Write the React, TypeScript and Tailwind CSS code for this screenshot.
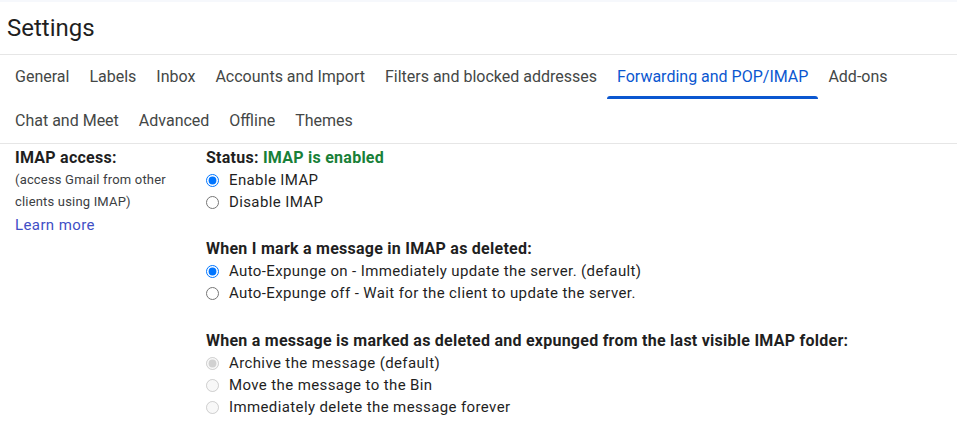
const tabsRow1 = [
  'General',
  'Labels',
  'Inbox',
  'Accounts and Import',
  'Filters and blocked addresses',
  'Forwarding and POP/IMAP',
  'Add-ons',
];
const tabsRow2 = ['Chat and Meet', 'Advanced', 'Offline', 'Themes'];

function Tab({ label, active }: { label: string; active?: boolean }) {
  return (
    <div
      className={
        'relative flex h-[44px] items-center px-[10px] text-[16px] ' +
        (active ? 'text-[#0b57d0]' : 'text-[#444746]')
      }
    >
      {label}
      {active && (
        <span className="absolute bottom-0 left-0 right-0 h-[3px] rounded-t-[3px] bg-[#0b57d0]" />
      )}
    </div>
  );
}

function Radio({
  name,
  label,
  checked,
  disabled,
}: {
  name: string;
  label: string;
  checked?: boolean;
  disabled?: boolean;
}) {
  return (
    <label className="flex h-[22px] items-center">
      <input
        type="radio"
        name={name}
        defaultChecked={checked}
        disabled={disabled}
        className="h-[13px] w-[13px]"
      />
      <span className="ml-[10px] tracking-[0.38px]">{label}</span>
    </label>
  );
}

export default function App() {
  return (
    <div
      className="h-[421px] w-[957px] overflow-hidden bg-white text-[#1f1f1f]"
      style={{ fontFamily: 'Roboto, "Liberation Sans", sans-serif' }}
    >
      <div className="h-[2px] bg-[#f6f8fc]" />
      <div className="flex h-[53px] items-center border-b border-[#e6e6e6] pl-[7px] text-[24px] text-[#1f1f1f]">
        Settings
      </div>

      {/* tabs */}
      <div className="border-b border-[#e6e6e6] px-[5px]">
        <div className="flex">
          {tabsRow1.map((t) => (
            <Tab key={t} label={t} active={t === 'Forwarding and POP/IMAP'} />
          ))}
        </div>
        <div className="flex">
          {tabsRow2.map((t) => (
            <Tab key={t} label={t} />
          ))}
        </div>
      </div>

      {/* IMAP section */}
      <div className="flex pl-[15px] pt-[3px] text-[15px]">
        <div className="w-[191px] shrink-0">
          <div className="h-[22px] text-[16px] font-bold leading-[22px] tracking-[0.25px]">
            IMAP access:
          </div>
          <div className="text-[13px] leading-[22px] tracking-[0.18px] text-[#3c4043]">
            (access Gmail from other
            <br />
            clients using IMAP)
          </div>
          <div className="leading-[24px] tracking-[0.4px] text-[#3f4fc6]">Learn more</div>
        </div>

        <div className="flex flex-col leading-[22px]">
          <div className="text-[16px] font-bold tracking-[0.25px]">
            Status: <span className="text-[#188038]">IMAP is enabled</span>
          </div>
          <Radio name="imap" label="Enable IMAP" checked />
          <Radio name="imap" label="Disable IMAP" />

          <div className="mt-[25px] text-[16px] font-bold tracking-[0.25px]">
            When I mark a message in IMAP as deleted:
          </div>
          <Radio
            name="expunge"
            label="Auto-Expunge on - Immediately update the server. (default)"
            checked
          />
          <Radio name="expunge" label="Auto-Expunge off - Wait for the client to update the server." />

          <div className="mt-[26px] text-[16px] font-bold tracking-[0.25px]">
            When a message is marked as deleted and expunged from the last visible IMAP folder:
          </div>
          <Radio name="expunged" label="Archive the message (default)" checked disabled />
          <Radio name="expunged" label="Move the message to the Bin" disabled />
          <Radio name="expunged" label="Immediately delete the message forever" disabled />
        </div>
      </div>
    </div>
  );
}
